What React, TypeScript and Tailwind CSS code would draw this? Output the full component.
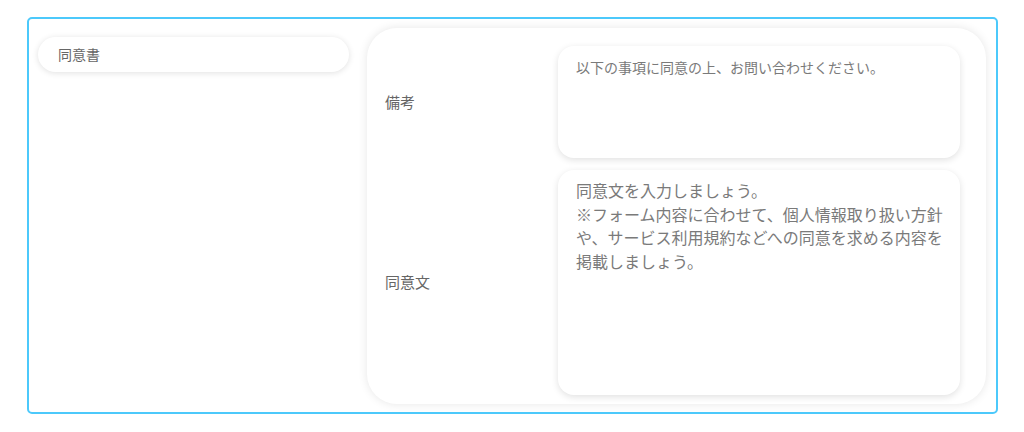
const font = {
  fontFamily: '"Noto Sans CJK JP", "Noto Sans", sans-serif',
};

export default function App() {
  return (
    <div className="w-[1024px] h-[432px] bg-white pt-[17px] pl-[27px]" style={font}>
      <div className="flex w-[971px] h-[397px] gap-[18px] rounded-[5px] border-2 border-[#4cc9fb] p-[9px] pr-[10px] pb-[8px]">
        {/* left column */}
        <div className="w-[311px] pt-[9px]">
          <div className="flex h-[35px] items-center rounded-full bg-white pl-[20px] text-[14px] text-[#666] shadow-[0_1px_6px_rgba(0,0,0,0.12)]">
            同意書
          </div>
        </div>

        {/* right panel */}
        <div className="flex flex-1 flex-col gap-[12px] rounded-[30px] bg-white pt-[18px] pb-[9px] pl-[18px] pr-[26px] shadow-[0_0_10px_rgba(0,0,0,0.1)]">
          <div className="flex items-center">
            <div className="w-[173px] text-[15px] text-[#666]">備考</div>
            <div className="h-[112px] flex-1 rounded-[16px] bg-white pt-[11px] pl-[18px] pr-[12px] text-[14px] leading-[20px] text-[#7a7a7a] shadow-[0_2px_7px_rgba(0,0,0,0.12)]">
              以下の事項に同意の上、お問い合わせください。
            </div>
          </div>
          <div className="flex flex-1 items-center">
            <div className="w-[173px] text-[15px] text-[#666]">同意文</div>
            <div className="h-full flex-1 rounded-[16px] bg-white pt-[9px] pl-[18px] pr-[11px] text-[16px] leading-[23.5px] text-[#7a7a7a] shadow-[0_2px_7px_rgba(0,0,0,0.12)]">
              同意文を入力しましょう。
              <br />
              ※フォーム内容に合わせて、個人情報取り扱い方針や、サービス利用規約などへの同意を求める内容を掲載しましょう。
            </div>
          </div>
        </div>
      </div>
    </div>
  );
}
